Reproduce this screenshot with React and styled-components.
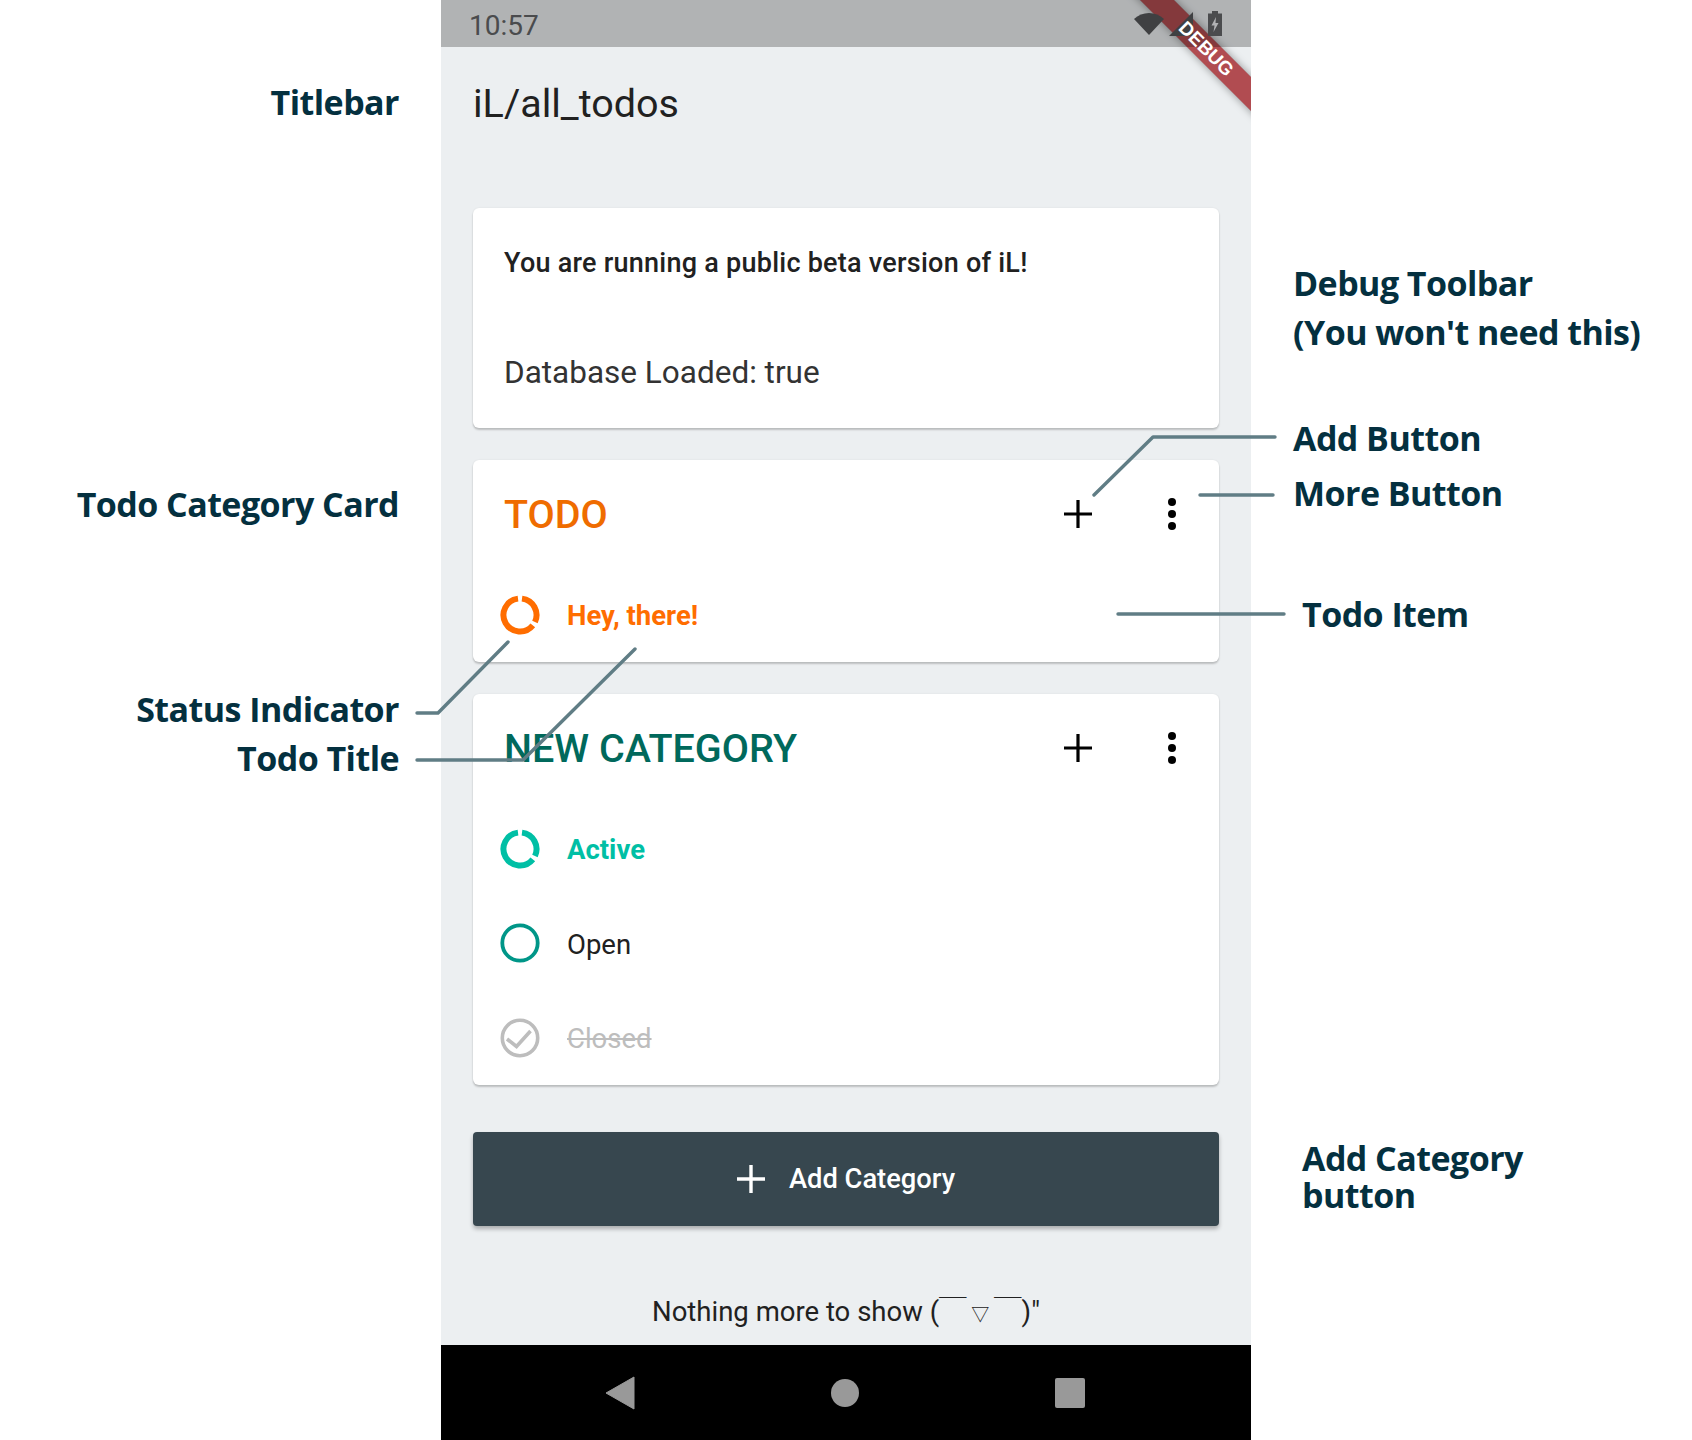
import React from 'react';
import styled, { createGlobalStyle } from 'styled-components';

const GlobalStyle = createGlobalStyle`
  html, body {
    margin: 0;
    padding: 0;
    background: #fff;
  }
  body {
    font-family: 'Roboto', 'Noto Sans', sans-serif;
  }
`;

const Page = styled.div`
  position: relative;
  width: 1692px;
  height: 1440px;
  display: flex;
  justify-content: center;
  overflow: hidden;
`;

const Phone = styled.div`
  position: relative;
  width: 810px;
  height: 1440px;
  display: flex;
  flex-direction: column;
  background: #eceff1;
  overflow: hidden;
`;

const StatusBar = styled.div`
  position: relative;
  z-index: 2;
  height: 47px;
  flex: none;
  display: flex;
  align-items: center;
  justify-content: space-between;
  padding: 3px 29px 0 28px;
  box-sizing: border-box;
  background: rgba(0, 0, 0, 0.25);
  color: #4a4b4d;
  font-size: 28px;
`;

const StatusIcons = styled.div`
  display: flex;
  align-items: center;
  gap: 5px;
  margin-top: -3px;
`;

const BatteryIcon = styled.svg`
  margin-left: 10px;
`;

const Ribbon = styled.div`
  position: absolute;
  z-index: 1;
  top: 36.5px;
  right: -54.5px;
  width: 200px;
  height: 24px;
  transform: rotate(45deg);
  background: rgba(160, 30, 36, 0.78);
  box-shadow: 0 0 9px rgba(0, 0, 0, 0.4);
`;

const RibbonLabel = styled(Ribbon)`
  z-index: 3;
  display: flex;
  align-items: center;
  justify-content: center;
  background: none;
  box-shadow: none;
  color: #fff;
  font-family: 'Liberation Sans', sans-serif;
  font-size: 19px;
  font-weight: 700;
`;

const Title = styled.div`
  height: 112px;
  flex: none;
  display: flex;
  align-items: center;
  padding-left: 32px;
  color: #212121;
  font-size: 39.5px;
`;

const Content = styled.div`
  flex: 1;
  display: flex;
  flex-direction: column;
  padding: 49px 32px 0;
`;

const Card = styled.div`
  background: #fff;
  border-radius: 6px;
  box-shadow: 0 2px 2px rgba(0, 0, 0, 0.2), 0 0 2px rgba(0, 0, 0, 0.08);
  margin-bottom: 32px;
`;

const InfoCard = styled(Card)`
  height: 220px;
  box-sizing: border-box;
  padding: 36px 31px 0;
  color: #212121;
`;

const BetaText = styled.div`
  font-size: 27px;
  font-weight: 500;
  letter-spacing: 0.25px;
  line-height: 38px;
`;

const LoadedText = styled.div`
  margin-top: 72px;
  font-size: 31.5px;
  line-height: 38px;
  color: #333;
`;

const CategoryHeader = styled.div`
  height: 107.5px;
  display: flex;
  align-items: center;
  padding-left: 31px;
  box-sizing: border-box;
`;

const CategoryName = styled.div`
  flex: 1;
  margin-top: 2px;
  font-size: 39.5px;
  font-weight: 500;
  color: ${props => props.color};
`;

const HeaderAction = styled.div`
  width: 94px;
  height: 60px;
  display: flex;
  align-items: center;
  justify-content: center;
`;

const TodoRow = styled.div`
  height: 94.5px;
  display: flex;
  align-items: center;
  padding-left: 27px;
  gap: 27px;
`;

const TodoText = styled.span`
  margin-top: 2px;
  font-size: 27.5px;
  font-weight: ${props => (props.status === 'active' ? 700 : 400)};
  color: ${props => ({
    active: props.color,
    open: '#212121',
    closed: '#bdbdbd'
  }[props.status])};
  text-decoration: ${props => (props.status === 'closed' ? 'line-through' : 'none')};
`;

const AddCategoryButton = styled.div`
  height: 94px;
  margin-top: 15px;
  display: flex;
  align-items: center;
  justify-content: center;
  gap: 24px;
  background: #37474f;
  border-radius: 4px;
  box-shadow: 0 3px 4px rgba(0, 0, 0, 0.28);
  color: #fff;
  font-size: 27.3px;
  font-weight: 500;
`;

const Footer = styled.div`
  margin-top: 68px;
  text-align: center;
  color: #212121;
  font-family: 'Roboto', 'Noto Sans CJK JP', sans-serif;
  font-size: 27.5px;
  line-height: 36px;
  white-space: nowrap;
`;

const FaceMouth = styled.span`
  display: inline-block;
  width: 27.5px;
  text-align: center;
  font-size: 18px;
`;

const NavBar = styled.div`
  height: 95px;
  flex: none;
  display: flex;
  align-items: center;
  justify-content: space-between;
  padding: 0 166px 0 164px;
  background: #000;
`;

const Annotation = styled.div`
  position: absolute;
  left: ${props => props.left}px;
  top: ${props => props.top}px;
  width: ${props => props.width || 'auto'};
  color: #04303f;
  font-family: 'Open Sans', sans-serif;
  font-size: 34px;
  font-weight: 700;
  letter-spacing: -0.55px;
  line-height: ${props => props.lineHeight || 49}px;
  white-space: nowrap;
  text-align: ${props => props.align || 'left'};
`;

const Connectors = styled.svg`
  position: absolute;
  inset: 0;
  pointer-events: none;
`;

const PlusIcon = ({ color = '#000', size = 28, stroke = 3.2 }) => (
  <svg width={size} height={size} viewBox={`0 0 ${size} ${size}`}>
    <path d={`M${size / 2} 0V${size}M0 ${size / 2}H${size}`} stroke={color} strokeWidth={stroke} fill="none" />
  </svg>
);

const MoreIcon = () => (
  <svg width="8" height="32" viewBox="0 0 8 32">
    <circle cx="4" cy="4" r="4" fill="#000" />
    <circle cx="4" cy="16" r="4" fill="#000" />
    <circle cx="4" cy="28" r="4" fill="#000" />
  </svg>
);

const StatusIcon = ({ status, color }) => {
  if (status === 'active') {
    return (
      <svg width="40" height="40" viewBox="0 0 40 40">
        <path d="M22 3.62A16.5 16.5 0 0 1 34.95 26.97" stroke={color} strokeWidth="6" fill="none" />
        <path d="M32.82 30.38A16.5 16.5 0 1 1 18 3.62" stroke={color} strokeWidth="6" fill="none" />
      </svg>
    );
  }
  if (status === 'open') {
    return (
      <svg width="40" height="40" viewBox="0 0 40 40">
        <circle cx="20" cy="20" r="17.7" stroke={color} strokeWidth="3.8" fill="none" />
      </svg>
    );
  }
  return (
    <svg width="40" height="40" viewBox="0 0 40 40">
      <circle cx="20" cy="20" r="17.7" stroke="#bdbdbd" strokeWidth="3.6" fill="none" />
      <path d="M7 21L16.5 28.5L30.5 13" stroke="#bdbdbd" strokeWidth="3.6" fill="none" />
    </svg>
  );
};

const TodoItem = ({ status, color, ringColor, children }) => (
  <TodoRow>
    <StatusIcon status={status} color={ringColor || color} />
    <TodoText status={status} color={color}>{children}</TodoText>
  </TodoRow>
);

const CategoryCard = ({ name, color, children }) => (
  <Card>
    <CategoryHeader>
      <CategoryName color={color}>{name}</CategoryName>
      <HeaderAction><PlusIcon /></HeaderAction>
      <HeaderAction><MoreIcon /></HeaderAction>
    </CategoryHeader>
    {children}
  </Card>
);

const connectorPaths = [
  'M1094 495L1153 437H1275',
  'M1200 495H1273',
  'M1118 614H1284',
  'M417 713H438L508 642',
  'M417 760H523L635 649'
];

export default function App() {
  return (
    <Page>
      <GlobalStyle />
      <Phone>
        <StatusBar>
          <span>10:57</span>
          <StatusIcons>
            <svg width="30" height="22" viewBox="0 0 30 22">
              <path d="M0 6C8-2 22-2 30 6L15 22Z" fill="#3f4042" />
            </svg>
            <svg width="24" height="24" viewBox="0 0 24 24">
              <path d="M24 0V24H0Z" fill="#3f4042" />
            </svg>
            <BatteryIcon width="14" height="25" viewBox="0 0 14 25">
              <path d="M4 0H10V2.5H14V25H0V2.5H4Z" fill="#4b4c4e" />
              <path d="M8 6L3.5 14.5H6.5L5.5 21L10.5 12H7.5Z" fill="#b1b2b4" />
            </BatteryIcon>
          </StatusIcons>
        </StatusBar>
        <Ribbon />
        <RibbonLabel>DEBUG</RibbonLabel>
        <Title>iL/all_todos</Title>
        <Content>
          <InfoCard>
            <BetaText>You are running a public beta version of iL!</BetaText>
            <LoadedText>Database Loaded: true</LoadedText>
          </InfoCard>
          <CategoryCard name="TODO" color="#ef6c00">
            <TodoItem status="active" color="#ff6d00">Hey, there!</TodoItem>
          </CategoryCard>
          <CategoryCard name="NEW CATEGORY" color="#00695c">
            <TodoItem status="active" color="#00bfa5">Active</TodoItem>
            <TodoItem status="open" color="#00897b" ringColor="#009688">Open</TodoItem>
            <TodoItem status="closed">Closed</TodoItem>
          </CategoryCard>
          <AddCategoryButton>
            <PlusIcon color="#fff" size={28} stroke={3.4} />
            <span>Add Category</span>
          </AddCategoryButton>
          <Footer>Nothing more to show (￣<FaceMouth>▽</FaceMouth>￣)"</Footer>
        </Content>
        <NavBar>
          <svg width="30" height="34" viewBox="0 0 30 34">
            <path d="M29 1V33L1 17Z" fill="#999" stroke="#999" strokeLinejoin="round" />
          </svg>
          <svg width="28" height="28" viewBox="0 0 28 28">
            <circle cx="14" cy="14" r="14" fill="#999" />
          </svg>
          <svg width="30" height="30" viewBox="0 0 30 30">
            <rect width="30" height="30" rx="2" fill="#999" />
          </svg>
        </NavBar>
      </Phone>
      <Annotation left={0} width="399px" align="right" top={78}>Titlebar</Annotation>
      <Annotation left={0} width="399px" align="right" top={480}>Todo Category Card</Annotation>
      <Annotation left={0} width="399px" align="right" top={685}>Status Indicator</Annotation>
      <Annotation left={0} width="399px" align="right" top={734}>Todo Title</Annotation>
      <Annotation left={1293} top={259}>Debug Toolbar<br />(You won't need this)</Annotation>
      <Annotation left={1293} top={414}>Add Button</Annotation>
      <Annotation left={1293} top={469}>More Button</Annotation>
      <Annotation left={1302} top={590}>Todo Item</Annotation>
      <Annotation left={1302} top={1140} lineHeight={37}>Add Category<br />button</Annotation>
      <Connectors width="1692" height="1440" viewBox="0 0 1692 1440">
        {connectorPaths.map(d => (
          <path key={d} d={d} stroke="#607d85" strokeWidth="3.4" strokeLinecap="round" strokeLinejoin="round" fill="none" />
        ))}
      </Connectors>
    </Page>
  );
}
